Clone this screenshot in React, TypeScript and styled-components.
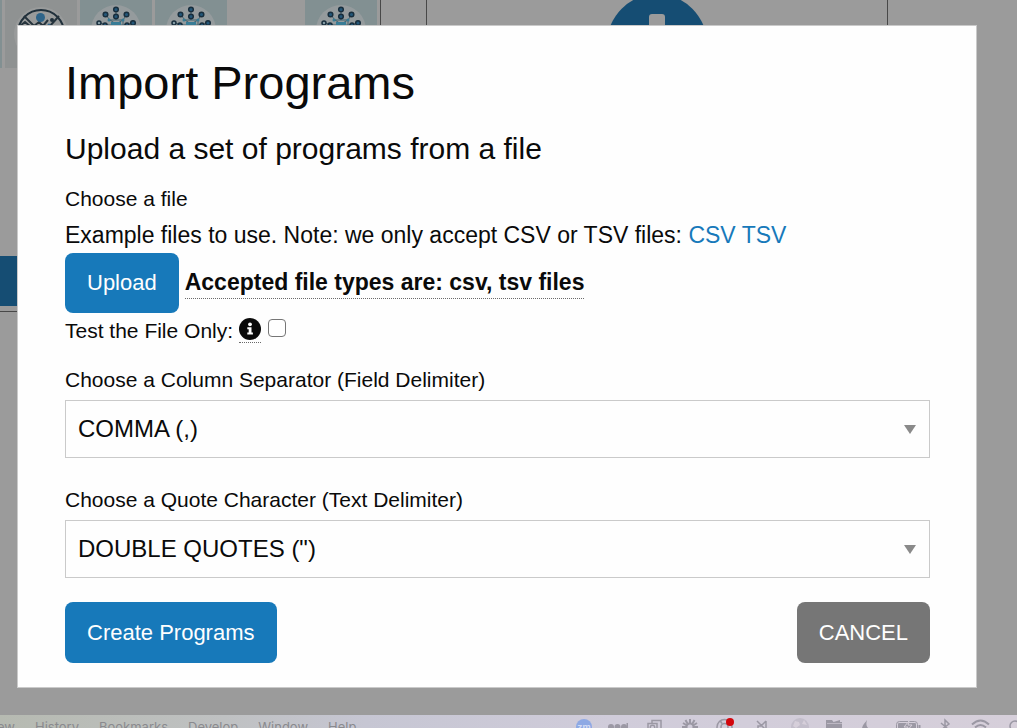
import React from "react";
import styled, { createGlobalStyle } from "styled-components";

const GlobalStyle = createGlobalStyle`
  *, *::before, *::after { box-sizing: border-box; }
  body {
    margin: 0;
    background: #9b9b9b;
    color: #0a0a0a;
    font-family: "Liberation Sans", Arial, sans-serif;
  }
`;

const Screen = styled.div`
  position: relative;
  display: flex;
  flex-direction: column;
  min-height: 100vh;
  overflow: hidden;
`;

const Backdrop = styled.div`
  flex: 1;
  overflow: hidden;
`;

const Panels = styled.div`
  display: flex;
  gap: 45px;
  height: 256px;
  padding-right: 129px;
`;

const Gallery = styled.div`
  display: flex;
  gap: 3px;
  width: 381px;
  padding-right: 3px;
  border-right: 1px solid #484848;
`;

const Tile = styled.svg<{ $w?: number }>`
  display: block;
  flex: none;
  width: ${(p) => p.$w ?? 72}px;
  height: 68px;
`;

const ActionPanel = styled.div`
  flex: 1;
  display: flex;
  justify-content: center;
  border: solid #484848;
  border-width: 0 1px;
`;

const Stripe = styled.div`
  height: 50px;
  margin-right: 129px;
  background: #154d73;
`;

const Rule = styled.div`
  height: 6px;
  margin-right: 129px;
  border-bottom: 1px solid #484848;
`;

const MenuBar = styled.div`
  display: flex;
  justify-content: space-between;
  height: 13px;
  overflow: hidden;
  background: linear-gradient(90deg, #b6bab1 0, #bfc1c2 22%, #c6c6d3 36%, #d0ccda 60%, #d6cfda 100%);
  color: #8a8a8e;
  font: 13px/24px Inter, sans-serif;
`;

const MenuItems = styled.div`
  display: flex;
  gap: 20px;
  margin-left: -3px;
`;

const StatusIcons = styled.div`
  display: flex;
  gap: 18px;
`;

const StatusIcon = styled.svg<{ $w: number }>`
  display: block;
  flex: none;
  width: ${(p) => p.$w}px;
  height: 24px;
  overflow: visible;
  fill: none;
  stroke: #9b98a4;
  stroke-width: 2;
`;

const Overlay = styled.div`
  position: absolute;
  inset: 0;
  padding: 25px 40px 0 17px;
`;

const Dialog = styled.form`
  padding: 24px 46px 24px 47px;
  border: 1px solid #cacaca;
  background: #fefefe;
`;

const Title = styled.h1`
  margin: 0 0 12px;
  font-size: 47px;
  font-weight: 400;
  line-height: 66px;
`;

const Subtitle = styled.h2`
  margin: 0 0 11px;
  font-size: 30px;
  font-weight: 400;
  line-height: 42px;
`;

const Label = styled.label`
  display: block;
  font-size: 21px;
  line-height: 36px;
`;

const Text = styled.p`
  margin: 0;
  font-size: 23px;
  line-height: 36px;
`;

const Link = styled.a`
  color: #1779ba;
  text-decoration: none;
`;

const UploadRow = styled.div`
  display: flex;
  align-items: center;
  gap: 6px;
`;

const Button = styled.button<{ $muted?: boolean }>`
  height: 60px;
  padding: 0 22px;
  border: 0;
  border-radius: 8px;
  background: ${(p) => (p.$muted ? "#767676" : "#1779ba")};
  color: #fefefe;
  font: 22px "Liberation Sans", Arial, sans-serif;
`;

const Accepted = styled.strong`
  margin-bottom: 2px;
  border-bottom: 1px dotted #6a6a6a;
  font-size: 23px;
  line-height: 32px;
`;

const TestRow = styled.div`
  display: flex;
  align-items: flex-start;
  gap: 6px;
`;

const InfoTip = styled.span`
  display: block;
  height: 30px;
  padding-top: 5px;
  border-bottom: 1px dotted #6a6a6a;

  svg { display: block; }
`;

const Checkbox = styled.input`
  appearance: none;
  width: 18px;
  height: 18px;
  margin: 6px 0 0 1px;
  border: 1px solid #767676;
  border-radius: 4px;
  background: #fff;
`;

const Field = styled.div`
  margin: 13px 0 24px;

  & + & { margin-top: 0; }
`;

const SelectBox = styled.div`
  display: grid;
  align-items: center;
  margin-top: 2px;

  > * { grid-area: 1 / 1; }
  svg { justify-self: end; margin-right: 14px; pointer-events: none; }
`;

const Select = styled.select`
  appearance: none;
  width: 100%;
  height: 58px;
  padding: 0 12px 2px;
  border: 1px solid #cacaca;
  border-radius: 0;
  background: #fefefe;
  color: #0a0a0a;
  font: 24px "Liberation Sans", Arial, sans-serif;
`;

const Actions = styled.div`
  display: flex;
  justify-content: space-between;

  ${Button} {
    height: 61px;
  }
`;

function NetworkTile() {
  return (
    <Tile viewBox="0 0 72 68" aria-hidden="true">
      <rect width="72" height="68" fill="#829092" />
      <circle cx="36" cy="30" r="25" fill="#959b9d" />
      <g stroke="#42626f" strokeWidth="1" fill="none">
        <path d="M36 10v10M25 14l5 6 6 4 7-4 4-6M19 23l10 2h14l11-2M29 20h14v5" />
      </g>
      <g fill="#245779" stroke="#182e3d" strokeWidth="1.5">
        <circle cx="36" cy="9.500" r="2.300" />
        <circle cx="36" cy="16.500" r="2.300" />
        <circle cx="25.500" cy="14.500" r="2.300" />
        <circle cx="46.500" cy="14.500" r="2.300" />
        <circle cx="53" cy="23" r="2.300" />
        <circle cx="19" cy="23" r="2" fill="#829aa3" />
        <circle cx="25" cy="25" r="2" />
        <circle cx="47" cy="25" r="2" />
      </g>
      <g fill="#387c96">
        <circle cx="29" cy="20" r="1.500" />
        <circle cx="43" cy="20" r="1.500" />
        <path d="M31 22h10v6H31z" />
      </g>
    </Tile>
  );
}

function ChartTile() {
  return (
    <Tile viewBox="0 0 72 68" aria-hidden="true">
      <rect width="72" height="68" fill="#8f9292" />
      <circle cx="36" cy="34" r="27" fill="#999b9b" />
      <circle cx="36" cy="33" r="23" fill="none" stroke="#20303b" strokeWidth="2" />
      <path d="M19 16l10 10 5-4 4 4 5-6M54 16L44 27M15 26l5-4 6 5" fill="none" stroke="#26343d" strokeWidth="2" />
      <circle cx="35.500" cy="17.500" r="4.500" fill="#2e6489" />
      <circle cx="47" cy="20" r="2" fill="#20303b" />
      <circle cx="44" cy="25" r="1.500" fill="#2e6489" />
    </Tile>
  );
}

function InfoIcon() {
  return (
    <svg width="22" height="22" viewBox="0 0 22 22" aria-hidden="true">
      <circle cx="11" cy="11" r="11" fill="#0a0a0a" />
      <circle cx="11" cy="6.300" r="1.900" fill="#fefefe" />
      <path d="M8.300 9.200h4.200v5.300h1.400v2H8.300v-2h1.400v-3.300H8.300z" fill="#fefefe" />
    </svg>
  );
}

function SelectField({ id, label, options }: { id: string; label: string; options: string[] }) {
  return (
    <Field>
      <Label htmlFor={id}>{label}</Label>
      <SelectBox>
        <Select id={id}>
          {options.map((option) => (
            <option key={option}>{option}</option>
          ))}
        </Select>
        <svg width="12" height="9" viewBox="0 0 12 9" aria-hidden="true">
          <path d="M0 0h12L6 9z" fill="#8a8a8a" />
        </svg>
      </SelectBox>
    </Field>
  );
}

function StatusArea() {
  return (
    <StatusIcons aria-hidden="true">
      <StatusIcon $w={14}>
        <circle cx="8" cy="12" r="8" fill="#8ea9e4" stroke="none" />
        <text x="8" y="15" textAnchor="middle" fill="#d3dcf3" stroke="none" fontSize="9" fontWeight="700">zm</text>
      </StatusIcon>
      <StatusIcon $w={21}>
        <g fill="#9b98a4" stroke="none">
          <circle cx="3" cy="12" r="3" />
          <circle cx="9.500" cy="12" r="3" />
          <circle cx="16" cy="12" r="3" />
          <path d="M18.500 8h1.500v8h-1.500z" />
        </g>
      </StatusIcon>
      <StatusIcon $w={17}>
        <path d="M5 8V5.500h9V14h-3M1 18V8.500h9V18" strokeWidth="1.500" />
        <circle cx="5.500" cy="12.500" r="2.200" strokeWidth="1.500" />
      </StatusIcon>
      <StatusIcon $w={16}>
        <circle cx="8" cy="12" r="3.500" />
        <path d="M8 9V4M10 9.500l2.500-4.500M11 10.500l4-2.500M6 9.500L3.500 5M5 10.500L1 8M4.500 12H0M11.500 12H16" />
      </StatusIcon>
      <StatusIcon $w={23}>
        <circle cx="8.500" cy="12" r="7.500" strokeWidth="1.500" />
        <circle cx="8.500" cy="12" r="3.500" strokeWidth="1.500" />
        <path d="M4 5.500l2 3M13 5.500l-2 3" strokeWidth="1.500" />
        <circle cx="14" cy="7" r="4" fill="#d3060c" stroke="none" />
      </StatusIcon>
      <StatusIcon $w={16}>
        <path d="M0 6l10 10M9 6v8M9 6l-5 5H1v3" strokeWidth="1.500" />
      </StatusIcon>
      <StatusIcon $w={17}>
        <circle cx="9" cy="12" r="9" fill="#c3becb" stroke="none" />
        <path d="M4 6l4 1 1 3-4 3-3-2zM13 5l-2 4 5 1" fill="#d6cfda" stroke="none" />
      </StatusIcon>
      <StatusIcon $w={18}>
        <path d="M0 5h6l1.500 2L14 5v2h2v12H0z" fill="#9b98a4" stroke="none" />
        <path d="M1 8.500h15" stroke="#bdb8c4" strokeWidth="1" />
      </StatusIcon>
      <StatusIcon $w={16}>
        <path d="M5 5c-2 3-5 5-5 9h7c-3-3-3-5-2-9z" fill="#9b98a4" stroke="none" />
      </StatusIcon>
      <StatusIcon $w={27}>
        <rect x="0.500" y="6.500" width="21" height="11" rx="3" strokeWidth="1" />
        <rect x="2" y="8" width="18" height="8" rx="1" fill="#9b98a4" stroke="none" />
        <path d="M13 6l-5 6h4l-2 5 6-7h-4z" fill="#9b98a4" stroke="#d6cfda" strokeWidth="1" />
        <path d="M23.500 10v4" />
      </StatusIcon>
      <StatusIcon $w={13}>
        <path d="M0 8l8 7-4 4V5l4 4-8 6" strokeWidth="1.500" />
      </StatusIcon>
      <StatusIcon $w={19}>
        <path d="M0 9.500q8.500-8 17 0M3 12.500q5.500-5 11 0" />
      </StatusIcon>
      <StatusIcon $w={8}>
        <circle cx="6" cy="11" r="5" strokeWidth="1.500" />
      </StatusIcon>
    </StatusIcons>
  );
}

const menus = ["History", "Bookmarks", "Develop", "Window", "Help"];

export default function App() {
  return (
    <>
      <GlobalStyle />
      <Screen>
        <Backdrop aria-hidden="true">
          <Panels>
            <Gallery>
              <Tile $w={2}>
                <rect width="2" height="68" fill="#829092" />
              </Tile>
              <ChartTile />
              <NetworkTile />
              <NetworkTile />
              <Tile />
              <NetworkTile />
            </Gallery>
            <ActionPanel>
              <svg width="100" height="94" viewBox="0 0 100 94">
                <circle cx="50" cy="44" r="50" fill="#154d73" />
                <rect x="42" y="14" width="16" height="60" rx="3" fill="#9b9b9b" />
              </svg>
            </ActionPanel>
          </Panels>
          <Stripe />
          <Rule />
        </Backdrop>
        <MenuBar>
          <MenuItems>
            <span>ew</span>
            {menus.map((menu) => (
              <span key={menu}>{menu}</span>
            ))}
          </MenuItems>
          <StatusArea />
        </MenuBar>

        <Overlay>
          <Dialog role="dialog" aria-labelledby="import-title" onSubmit={(e) => e.preventDefault()}>
            <Title id="import-title">Import Programs</Title>
            <Subtitle>Upload a set of programs from a file</Subtitle>
            <Label as="div">Choose a file</Label>
            <Text>
              Example files to use. Note: we only accept CSV or TSV files: <Link href="#csv">CSV</Link>{" "}
              <Link href="#tsv">TSV</Link>
            </Text>
            <UploadRow>
              <Button type="button">Upload</Button>
              <Accepted>Accepted file types are: csv, tsv files</Accepted>
            </UploadRow>
            <TestRow>
              <Label htmlFor="test-only">Test the File Only:</Label>
              <InfoTip>
                <InfoIcon />
              </InfoTip>
              <Checkbox id="test-only" type="checkbox" />
            </TestRow>
            <SelectField
              id="separator"
              label="Choose a Column Separator (Field Delimiter)"
              options={["COMMA (,)", "TAB", "SEMICOLON (;)"]}
            />
            <SelectField
              id="quote"
              label="Choose a Quote Character (Text Delimiter)"
              options={['DOUBLE QUOTES (")', "SINGLE QUOTE (')"]}
            />
            <Actions>
              <Button type="submit">Create Programs</Button>
              <Button type="button" $muted>
                CANCEL
              </Button>
            </Actions>
          </Dialog>
        </Overlay>
      </Screen>
    </>
  );
}
